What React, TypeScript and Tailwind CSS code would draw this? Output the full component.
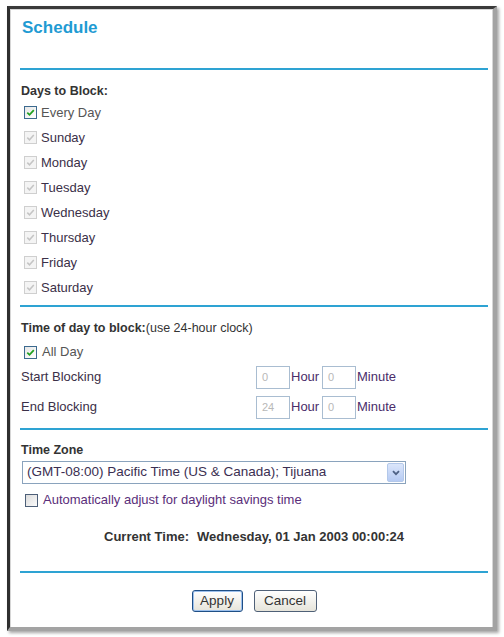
type BoxState = "on" | "off" | "dis";

const Check = ({ state }: { state: BoxState }) => {
  if (state === "on") {
    return (
      <span className="w-[13px] h-[13px] border border-[#3c6a8f] bg-gradient-to-br from-[#e6e6e6] to-white flex items-center justify-center shrink-0">
        <svg viewBox="0 0 9 9" className="w-[9px] h-[9px]">
          <path d="M1.3 4.6 L3.5 6.8 L7.8 2.1" stroke="#21a121" strokeWidth="1.7" fill="none" />
        </svg>
      </span>
    );
  }
  if (state === "dis") {
    return (
      <span className="w-[13px] h-[13px] border border-[#cfcfcf] bg-[#f4f4f4] flex items-center justify-center shrink-0">
        <svg viewBox="0 0 9 9" className="w-[9px] h-[9px]">
          <path d="M1.3 4.6 L3.5 6.8 L7.8 2.1" stroke="#c4c4c4" strokeWidth="1.5" fill="none" />
        </svg>
      </span>
    );
  }
  return (
    <span className="w-[13px] h-[13px] border border-[#4d5f78] bg-gradient-to-br from-[#dcdcdc] to-[#fbfbfb] shrink-0" />
  );
};

const Rule = ({ className }: { className: string }) => (
  <div className={`h-[2px] bg-[#2ea3d3] ${className}`} />
);

const TimeBox = ({ value }: { value: string }) => (
  <span className="w-[34px] h-[23px] border border-[#a9bdd1] bg-white text-[#b8b8b8] text-[11px] pl-[5px] flex items-center">
    {value}
  </span>
);

const days = ["Sunday", "Monday", "Tuesday", "Wednesday", "Thursday", "Friday", "Saturday"];

export default function App() {
  return (
    <div className="w-[504px] h-[637px] bg-white pl-[7px] pt-[6px] font-['Liberation_Sans',Arial,sans-serif] text-[#3b3048]">
      {/* window frame */}
      <div className="w-[490px] h-[625px] border-l-[3px] border-t-[3px] border-l-[#2f2f2f] border-t-[#3a3a3a] border-r-[4px] border-b-[4px] border-r-[#a3a3a3] border-b-[#a3a3a3] shadow-[2px_2px_3px_rgba(0,0,0,0.35)]">
        <div className="h-full border-l border-t border-r border-[#d6d6d6] bg-white pl-[9px] pr-[4px] pt-[8px]">
          <div className="h-[20px] leading-[20px] pl-[2px] text-[17px] font-bold text-[#1f9bd3]">
            Schedule
          </div>
          <Rule className="mt-[30px]" />

          {/* days to block */}
          <div className="mt-[13px] h-[16px] leading-[16px] pl-[1px] text-[12.5px] font-bold text-[#333]">
            Days to Block:
          </div>
          <div className="mt-[1px] flex flex-col">
            <div className="h-[25px] flex items-center gap-[4px] pl-[4px] text-[13px] text-[#555]">
              <Check state="on" />
              <span>Every Day</span>
            </div>
            {days.map((d) => (
              <div key={d} className="h-[25px] flex items-center gap-[4px] pl-[4px] text-[13px]">
                <Check state="dis" />
                <span>{d}</span>
              </div>
            ))}
          </div>
          <Rule className="mt-[5px]" />

          {/* time of day */}
          <div className="mt-[13px] h-[16px] leading-[16px] pl-[1px] text-[12.5px] text-[#333]">
            <span className="font-bold">Time of day to block:</span>
            <span>(use 24-hour clock)</span>
          </div>
          <div className="mt-[5px] h-[22px] flex items-center gap-[5px] pl-[4px] text-[13px] text-[#555]">
            <Check state="on" />
            <span>All Day</span>
          </div>
          <div className="h-[28px] flex items-center pl-[1px] text-[13px]">
            <span className="w-[235px]">Start Blocking</span>
            <TimeBox value="0" />
            <span className="ml-[1px] w-[31px] text-[#4a2d6a]">Hour</span>
            <TimeBox value="0" />
            <span className="ml-[1px] text-[#4a2d6a]">Minute</span>
          </div>
          <div className="mt-[2px] h-[28px] flex items-center pl-[1px] text-[13px]">
            <span className="w-[235px]">End Blocking</span>
            <TimeBox value="24" />
            <span className="ml-[1px] w-[31px] text-[#4a2d6a]">Hour</span>
            <TimeBox value="0" />
            <span className="ml-[1px] text-[#4a2d6a]">Minute</span>
          </div>
          <Rule className="mt-[7px]" />

          {/* time zone */}
          <div className="mt-[12px] h-[16px] leading-[16px] pl-[1px] text-[12.5px] font-bold text-[#333]">
            Time Zone
          </div>
          <div className="mt-[3px] ml-[2px] w-[384px] h-[23px] border border-[#8aa3bd] bg-white flex items-center">
            <span className="flex-1 pl-[4px] text-[13.5px] text-[#3b2f52]">
              (GMT-08:00) Pacific Time (US &amp; Canada); Tijuana
            </span>
            <span className="w-[17px] h-[19px] mr-[1px] rounded-[2px] border border-[#b3c8ea] bg-gradient-to-b from-[#dbe6fb] to-[#b6cbf3] flex items-center justify-center">
              <svg viewBox="0 0 8 6" className="w-[8px] h-[6px]">
                <path d="M1 1.2 L4 4.2 L7 1.2" stroke="#4d6185" strokeWidth="1.8" fill="none" />
              </svg>
            </span>
          </div>
          <div className="mt-[6px] h-[20px] flex items-center gap-[5px] pl-[5px] text-[13px] text-[#5a2e7a]">
            <Check state="off" />
            <span>Automatically adjust for daylight savings time</span>
          </div>

          <div className="mt-[19px] h-[16px] leading-[16px] flex text-[13px] font-bold text-[#333]">
            <span className="ml-[84px] w-[93px]">Current Time:</span>
            <span>Wednesday, 01 Jan 2003 00:00:24</span>
          </div>
          <Rule className="mt-[26px]" />

          {/* buttons */}
          <div className="mt-[17px] flex justify-center gap-[11px]">
            <button className="w-[51px] h-[22px] rounded-[3px] border border-[#1f4f86] bg-gradient-to-b from-white to-[#e6e4da] shadow-[inset_0_0_0_1px_#9cc0ec] text-[13.5px] text-[#333]">
              Apply
            </button>
            <button className="w-[63px] h-[22px] rounded-[3px] border border-[#4f6077] bg-gradient-to-b from-white to-[#e6e4da] text-[13.5px] text-[#333]">
              Cancel
            </button>
          </div>
        </div>
      </div>
    </div>
  );
}
